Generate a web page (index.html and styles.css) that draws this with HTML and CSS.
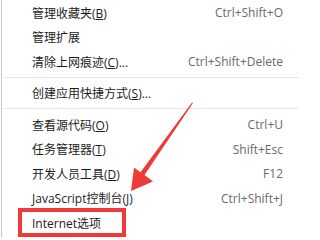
FILE: index.html
```html
<!DOCTYPE html>
<html lang="zh-CN">
<head>
<meta charset="utf-8">
<title>菜单</title>
<link rel="stylesheet" href="styles.css">
</head>
<body>
<div class="page">
  <ul class="menu">
    <li class="item"><span class="label">管理收藏夹(<u>B</u>)</span><span class="key">Ctrl+Shift+O</span></li>
    <li class="item"><span class="label">管理扩展</span></li>
    <li class="item"><span class="label">清除上网痕迹(<u>C</u>)...</span><span class="key">Ctrl+Shift+Delete</span></li>
    <li class="sep"></li>
    <li class="item"><span class="label">创建应用快捷方式(<u>S</u>)...</span></li>
    <li class="sep"></li>
    <li class="item"><span class="label">查看源代码(<u>O</u>)</span><span class="key">Ctrl+U</span></li>
    <li class="item"><span class="label">任务管理器(<u>T</u>)</span><span class="key">Shift+Esc</span></li>
    <li class="item"><span class="label">开发人员工具(<u>D</u>)</span><span class="key">F12</span></li>
    <li class="item"><span class="label">JavaScript控制台(<u>J</u>)</span><span class="key">Ctrl+Shift+J</span></li>
    <li class="item"><span class="label">Internet选项</span></li>
  </ul>
  <svg class="annot" width="299" height="238" viewBox="0 0 299 238" aria-hidden="true">
    <rect x="20" y="210" width="104" height="25" fill="none" stroke="#f03a3a" stroke-width="4"/>
    <polygon points="193,103 144.5,175 153,181.5 131,191 134,167.5 140.5,172.3 192,102.5" fill="#f03a3a"/>
  </svg>
</div>
</body>
</html>
```

FILE: styles.css
```css
html, body {
  margin: 0;
  padding: 0;
  background: #ffffff;
}

.page {
  position: relative;
  width: 299px;
  height: 238px;
  overflow: hidden;
}

.menu {
  list-style: none;
  margin: 0 0 0 1px;
  padding: 0.25px 0 0 0;
  height: 238px;
  box-sizing: border-box;
  border-left: 1px solid #c8c8c8;
  font-family: "Open Sans", "Noto Sans CJK SC", sans-serif;
  font-size: 12px;
  color: #1c1c1c;
}

.item {
  display: flex;
  justify-content: space-between;
  align-items: center;
  height: 24.5px;
  padding: 0 16px 0 30px;
  white-space: nowrap;
}

.label u {
  text-decoration: underline;
  text-underline-offset: 1px;
}

.key {
  color: #6a6a6a;
}

.sep {
  height: 1px;
  margin: 3px 0 3px 1px;
  background: #e6e6e6;
}

.annot {
  position: absolute;
  left: 0;
  top: 0;
}
```
